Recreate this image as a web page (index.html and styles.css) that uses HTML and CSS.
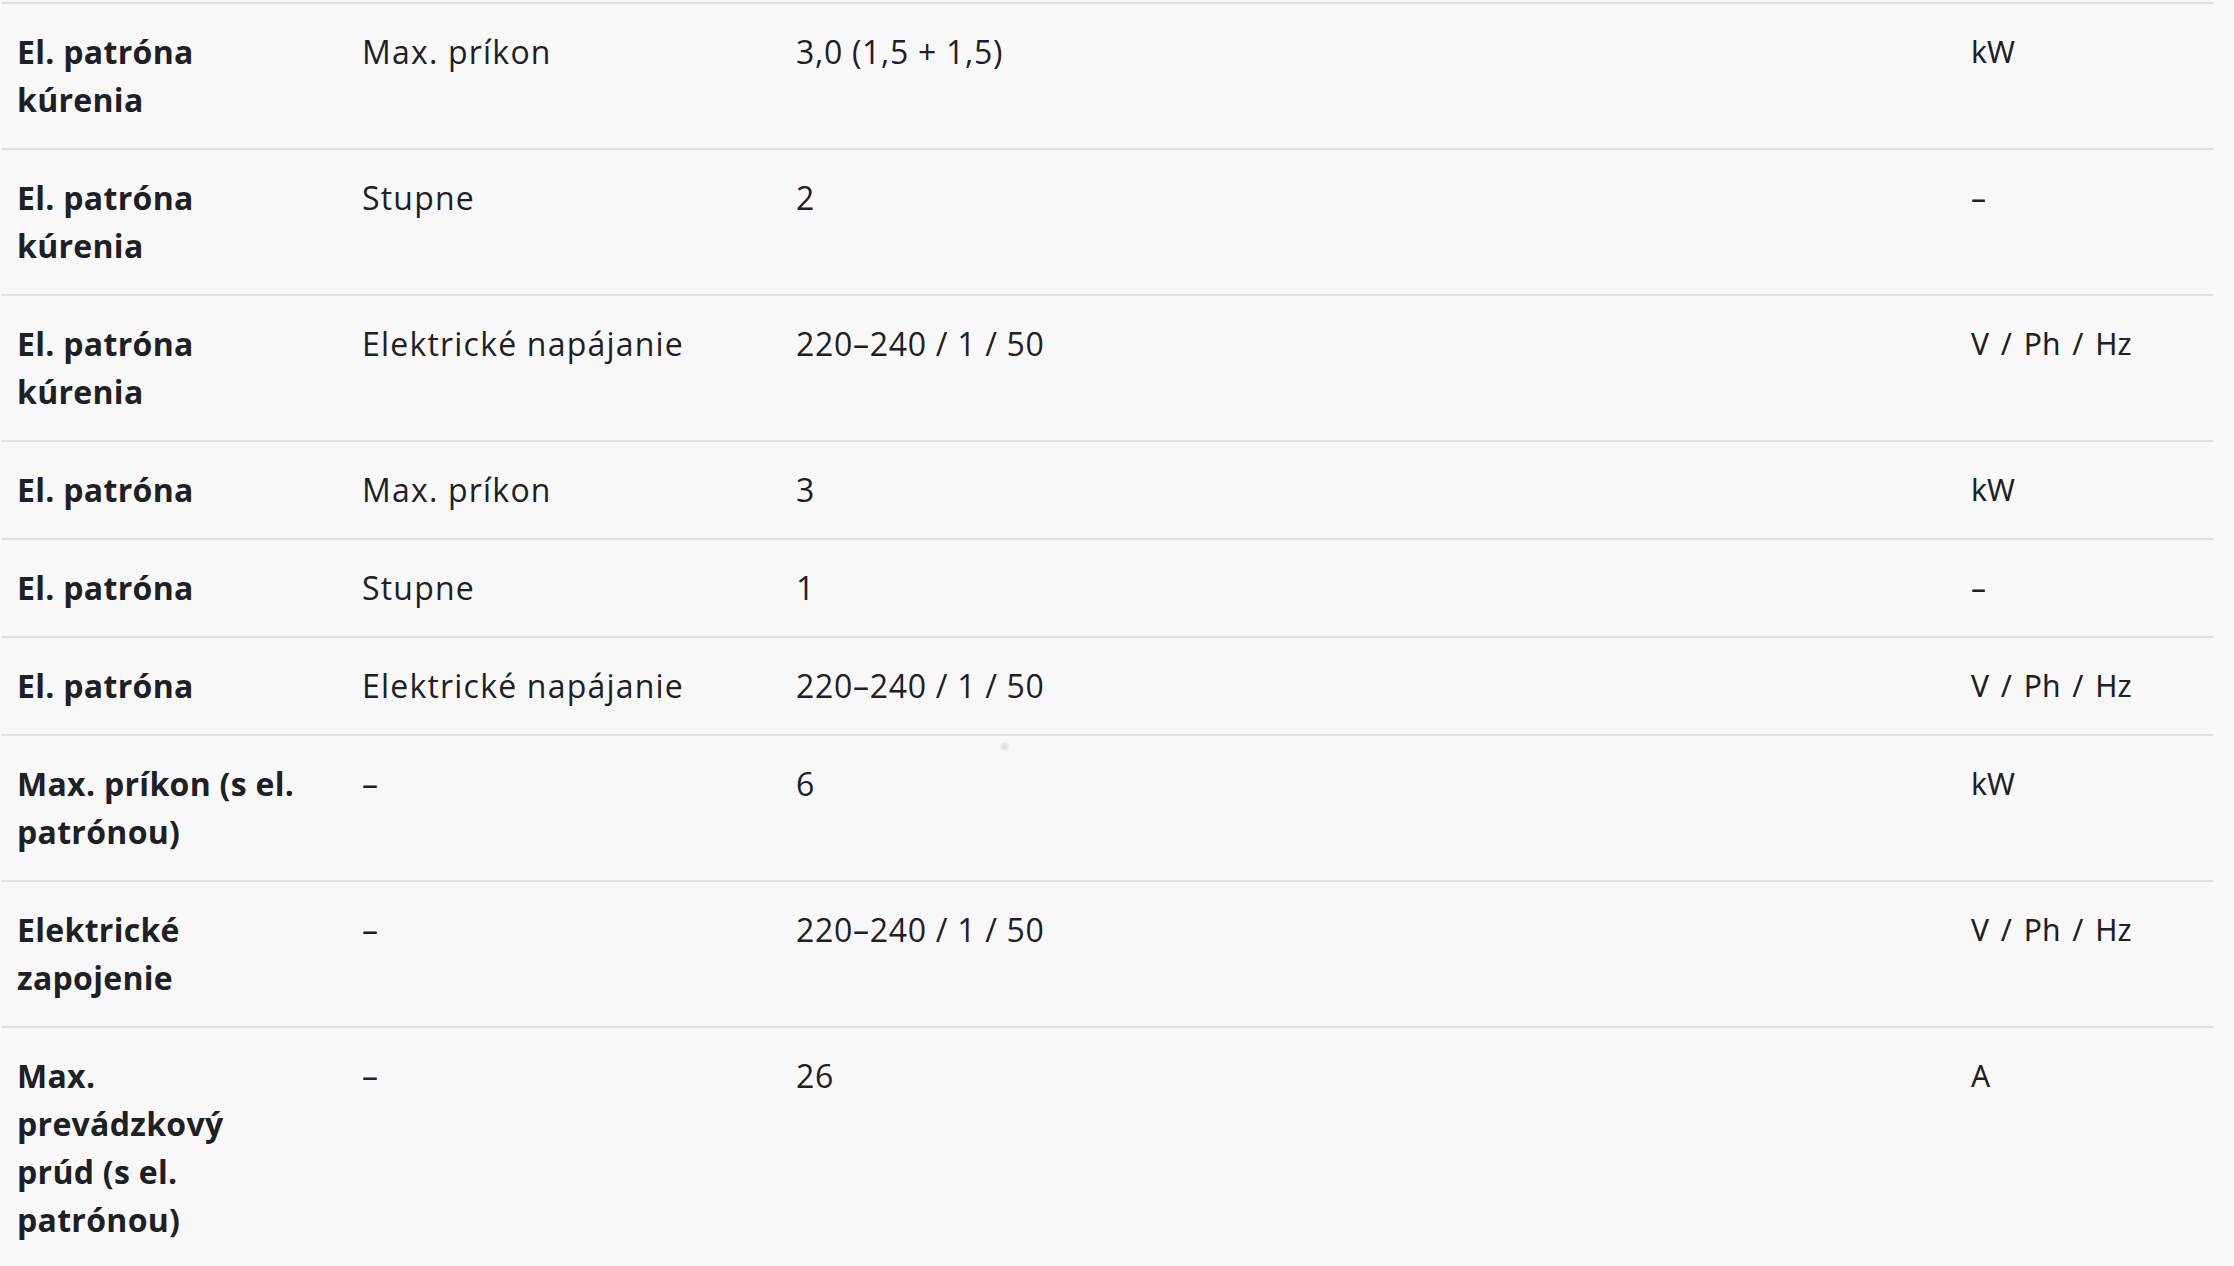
FILE: index.html
```html
<!DOCTYPE html>
<html lang="sk">
<head>
<meta charset="utf-8">
<title>Technické parametre</title>
<link rel="stylesheet" href="styles.css">
</head>
<body>
<div class="specs">
  <div class="row">
    <div class="c name">El. patróna kúrenia</div>
    <div class="c param">Max. príkon</div>
    <div class="c val">3,0 (1,5 + 1,5)</div>
    <div class="c unit">kW</div>
  </div>
  <div class="row">
    <div class="c name">El. patróna kúrenia</div>
    <div class="c param">Stupne</div>
    <div class="c val">2</div>
    <div class="c unit">–</div>
  </div>
  <div class="row">
    <div class="c name">El. patróna kúrenia</div>
    <div class="c param">Elektrické napájanie</div>
    <div class="c val">220–240 / 1 / 50</div>
    <div class="c unit">V / Ph / Hz</div>
  </div>
  <div class="row">
    <div class="c name">El. patróna</div>
    <div class="c param">Max. príkon</div>
    <div class="c val">3</div>
    <div class="c unit">kW</div>
  </div>
  <div class="row">
    <div class="c name">El. patróna</div>
    <div class="c param">Stupne</div>
    <div class="c val">1</div>
    <div class="c unit">–</div>
  </div>
  <div class="row">
    <div class="c name">El. patróna</div>
    <div class="c param">Elektrické napájanie</div>
    <div class="c val">220–240 / 1 / 50</div>
    <div class="c unit">V / Ph / Hz</div>
  </div>
  <div class="row">
    <div class="c name">Max. príkon (s el. patrónou)</div>
    <div class="c param">–</div>
    <div class="c val">6</div>
    <div class="c unit">kW</div>
  </div>
  <div class="row">
    <div class="c name">Elektrické zapojenie</div>
    <div class="c param">–</div>
    <div class="c val">220–240 / 1 / 50</div>
    <div class="c unit">V / Ph / Hz</div>
  </div>
  <div class="row">
    <div class="c name">Max. prevádzkový prúd (s el. patrónou)</div>
    <div class="c param">–</div>
    <div class="c val">26</div>
    <div class="c unit">A</div>
  </div>
  <span class="dot"></span>
</div>
</body>
</html>
```
FILE: styles.css
```css
html, body {
  margin: 0;
  background: #f8f8f8;
}

.specs {
  position: relative;
  width: 2212px;
  margin: 2px 0 0 1px;
}

.row {
  display: grid;
  grid-template-columns: 345px 434px 1175px 258px;
  border-top: 2px solid #dee2e6;
}

.c {
  padding: 24px 16px;
  font-family: "Open Sans", "Noto Sans", sans-serif;
  font-size: 32px;
  line-height: 48px;
  color: #1d2024;
}

.name {
  font-weight: 700;
  letter-spacing: 0.3px;
  padding-right: 44px;
}

.param {
  font-weight: 380;
  letter-spacing: 1.2px;
}

.val {
  font-weight: 380;
  letter-spacing: 0.7px;
}

.unit {
  font-family: "Noto Sans", "Open Sans", sans-serif;
  font-size: 30px;
  font-weight: 400;
  word-spacing: 4px;
}

.dot {
  position: absolute;
  left: 999px;
  top: 740px;
  width: 9px;
  height: 9px;
  border-radius: 50%;
  background: radial-gradient(circle, #dcdcdc 0%, #e8e8e8 50%, rgba(248, 248, 248, 0) 100%);
}
```
